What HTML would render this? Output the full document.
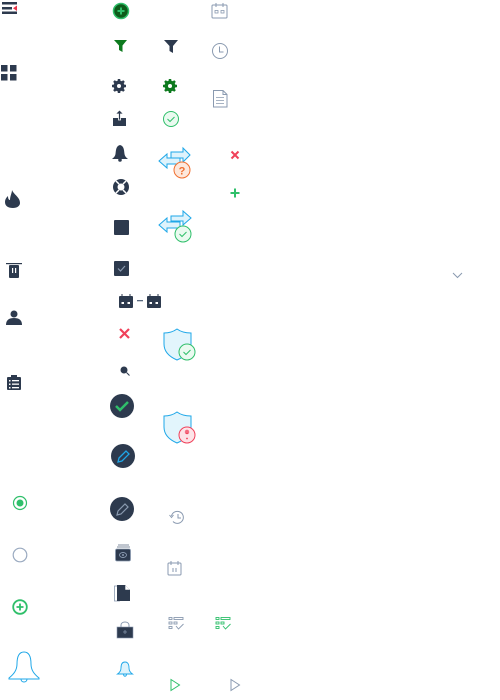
<!DOCTYPE html>
<html><head><meta charset="utf-8"><style>
html,body{margin:0;padding:0;background:#fff;width:500px;height:700px;overflow:hidden}
svg{position:absolute;left:0;top:0}
</style></head><body>
<svg width="500" height="700" viewBox="0 0 500 700" xmlns="http://www.w3.org/2000/svg">
<g fill="#2d3a4e">
 <!-- hamburger -->
 <rect x="2" y="2" width="15" height="2.5"/><rect x="2" y="7" width="10" height="2.5"/><rect x="2" y="11.5" width="15" height="2.5"/>
 <path d="M17 5.5 L13 8.2 L17 11 Z" fill="#e8344a"/>
 <!-- grid -->
 <rect x="1" y="65" width="6.5" height="6.5"/><rect x="10" y="65" width="6.5" height="6.5"/><rect x="1" y="74" width="6.5" height="6.5"/><rect x="10" y="74" width="6.5" height="6.5"/>
 <!-- flame -->
 <path d="M12 190 C14 195 20 197 20 203 C20 206 17 208 13 208 C8 208 5 206 5 202 C5 199 7 197 8 196 C8 199 9 200 10 200 C10 196 12 193 12 190 Z"/>
 <!-- trash -->
 <rect x="6" y="263" width="16" height="1.2"/><rect x="9" y="265" width="10" height="13" rx="1"/>
 <rect x="12" y="268" width="1.2" height="5" fill="#fff"/><rect x="15" y="268" width="1.2" height="5" fill="#fff"/>
 <!-- person -->
 <circle cx="14" cy="314" r="3.5"/><path d="M6 325 C6 320 9 318 14 318 C19 318 22 320 22 325 Z"/>
 <!-- clipboard -->
 <rect x="7" y="377" width="14" height="13" rx="1"/><rect x="11" y="375" width="6" height="3"/>
 <g fill="#fff"><rect x="9" y="380" width="1.5" height="1.5"/><rect x="12" y="380" width="7" height="1.3"/><rect x="9" y="383.5" width="1.5" height="1.5"/><rect x="12" y="383.5" width="7" height="1.3"/><rect x="9" y="387" width="1.5" height="1.5"/><rect x="12" y="387" width="7" height="1.3"/></g>
</g>
<!-- radios -->
<circle cx="20" cy="503" r="6.5" fill="none" stroke="#2fbf6a" stroke-width="1.2"/><circle cx="20" cy="503" r="3.5" fill="#2fbf6a"/>
<circle cx="20" cy="555" r="6.8" fill="none" stroke="#9aaac0" stroke-width="1.2"/>
<circle cx="20" cy="607" r="6.8" fill="none" stroke="#2fbf6a" stroke-width="1.8"/><path d="M20 603.5v7M16.5 607h7" stroke="#2fbf6a" stroke-width="1.8"/>
<!-- big bell -->
<path d="M24 652 C18 652 17 658 17 664 C17 670 14 674 9 678 L9 679 L39 679 L39 678 C34 674 31 670 31 664 C31 658 30 652 24 652 Z M21 679 C21 683 27 683 27 679" fill="none" stroke="#1ea7e8" stroke-width="1"/>

<!-- column 2 -->
<circle cx="121" cy="11" r="7.5" fill="#0d5c1a" stroke="#2fbf6a" stroke-width="1.5"/><path d="M121 7.5v7M117.5 11h7" stroke="#2fbf6a" stroke-width="2"/>
<path d="M114 40 H127 L122.5 45.5 V52 L119 50 V45.5 Z" fill="#0d7a1e"/>
<g fill="#2d3a4e">
 <circle cx="119" cy="86" r="5.5"/><g stroke="#2d3a4e" stroke-width="2.5"><path d="M119 79v14M112 86h14M114 81l10 10M124 81l-10 10"/></g><circle cx="119" cy="86" r="2" fill="#fff"/>
 <rect x="113" y="118" width="13" height="8"/><path d="M119.5 110 L115.5 114 H118.5 V120 H120.5 V114 H123.5 Z" stroke="#fff" stroke-width="0.8"/>
 <path d="M120 145 C116 146 116 150 115.5 154 C115 157 113 158 112 159 H128 C127 158 125 157 124.5 154 C124 150 124 146 120 145 Z"/><circle cx="120" cy="160" r="1.8"/>
 <circle cx="121" cy="187" r="8"/><circle cx="121" cy="187" r="3.5" fill="#fff"/>
 <rect x="114" y="220" width="15" height="15" rx="1"/>
 <rect x="114" y="261" width="15" height="15" rx="1"/>
</g>
<path d="M116 193 l3-3 M126 193 l-3-3 M116 181 l3 3 M126 181 l-3 3" stroke="#fff" stroke-width="1.5"/>
<path d="M118 268.5 l2.5 2.5 l4.5-5" stroke="#8a9ab0" stroke-width="1.2" fill="none"/>
<!-- calendars pair -->
<g fill="#2d3a4e"><rect x="119" y="296" width="14" height="12" rx="1"/><rect x="147" y="296" width="14" height="12" rx="1"/><rect x="137" y="300" width="6" height="1.3" fill="#5a6a80"/></g>
<g fill="#fff"><rect x="121.5" y="302" width="2.5" height="2"/><rect x="127.5" y="302" width="2.5" height="2"/><rect x="149.5" y="302" width="2.5" height="2"/><rect x="155.5" y="302" width="2.5" height="2"/></g>
<g stroke="#2d3a4e" stroke-width="1"><path d="M122 294v3M130 294v3M150 294v3M158 294v3"/></g>
<path d="M120 329 l9 9 M129 329 l-9 9" stroke="#f0415a" stroke-width="2.2"/>
<circle cx="124" cy="370" r="3.5" fill="#2d3a4e"/><path d="M126.5 372.5 l3 3" stroke="#2d3a4e" stroke-width="1"/>
<circle cx="122" cy="406" r="12" fill="#2d3a4e"/><path d="M116 406 l4 4 l8-8" stroke="#2fbf6a" stroke-width="2.5" fill="none"/>
<circle cx="123" cy="456" r="12" fill="#2d3a4e"/><path d="M118 462 l1-4 l7-7 l3 3 l-7 7 Z" stroke="#1ea7e8" stroke-width="1.3" fill="none"/>
<circle cx="122" cy="509" r="12" fill="#2d3a4e"/><path d="M117 515 l1-4 l7-7 l3 3 l-7 7 Z" stroke="#8a9ab0" stroke-width="1.2" fill="none"/>
<!-- money -->
<g><path d="M118 545h11M117 547h13" stroke="#5a6a80" stroke-width="0.8"/><rect x="115.5" y="549" width="15" height="12" rx="1.5" fill="#2d3a4e" stroke="#8a9ab0" stroke-width="0.8"/><ellipse cx="123" cy="555" rx="3.5" ry="2.5" fill="none" stroke="#8a9ab0" stroke-width="0.9"/><circle cx="123" cy="555" r="1" fill="#8a9ab0"/></g>
<!-- files -->
<rect x="114.5" y="586" width="5" height="15" fill="#fff" stroke="#8a9ab0" stroke-width="0.8"/><path d="M117 585 H125 L130 590 V601 H117 Z" fill="#2d3a4e"/><path d="M125 585 V590 H130" fill="#fff" stroke="#2d3a4e" stroke-width="0.6"/>
<!-- lock -->
<path d="M121 628 V625 C121 621 129 621 129 625 V628" fill="none" stroke="#8a9ab0" stroke-width="1"/><rect x="117" y="627" width="16" height="11" fill="#2d3a4e" stroke="#8a9ab0" stroke-width="0.6"/><circle cx="125" cy="632" r="1.1" fill="none" stroke="#8a9ab0" stroke-width="0.7"/>
<!-- small bell -->
<path d="M125 662 C122 662 121 665 121 668 C121 671 119 673 117.5 674 H132.5 C131 673 129 671 129 668 C129 665 128 662 125 662 Z M123.5 674 C123.5 677 126.5 677 126.5 674" fill="#def3fc" stroke="#1ea7e8" stroke-width="0.9"/>

<!-- column 3 -->
<path d="M164 40 H178 L173 46 V53 L169.5 51 V46 Z" fill="#2d3a4e"/>
<g fill="#0d7a1e"><circle cx="170" cy="86" r="5.5"/><g stroke="#0d7a1e" stroke-width="2.5"><path d="M170 79v14M163 86h14M165 81l10 10M175 81l-10 10"/></g><circle cx="170" cy="86" r="2" fill="#fff"/></g>
<circle cx="171" cy="119" r="7.5" fill="#eafaf0" stroke="#2fbf6a" stroke-width="1"/><path d="M167.5 119 l2.5 2.5 l4.5-4.5" stroke="#2fbf6a" stroke-width="1" fill="none"/>
<!-- arrows q -->
<g fill="#def3fc" stroke="#1ea7e8" stroke-width="1"><path d="M171 152 H183 V148 L190 155 L183 162 V158 H171 Z"/><path d="M180 158 H167 V154 L159 161 L167 168 V164 H180 Z"/></g>
<circle cx="182" cy="170" r="8" fill="#fde8dc" stroke="#f07030" stroke-width="1"/><text x="182" y="174.5" font-family="Liberation Sans,sans-serif" font-weight="bold" font-size="11" fill="#f07030" text-anchor="middle">?</text>
<g fill="#def3fc" stroke="#1ea7e8" stroke-width="1"><path d="M171 216 H183 V211 L191 218 L183 225 V221 H171 Z"/><path d="M180 222 H167 V218 L159 225 L167 232 V228 H180 Z"/></g>
<circle cx="183" cy="234" r="8" fill="#eafaf0" stroke="#2fbf6a" stroke-width="1"/><path d="M179.5 234 l2.5 2.5 l4.5-4.5" stroke="#2fbf6a" stroke-width="1" fill="none"/>
<!-- shields -->
<path d="M177 329 C173 332 168 333 164 333 V344 C164 352 170 357 177 360 C184 357 191 352 191 344 V333 C186 333 181 332 177 329 Z" fill="#e2f5fc" stroke="#1ea7e8" stroke-width="1"/>
<circle cx="187" cy="352" r="8" fill="#eafaf0" stroke="#2fbf6a" stroke-width="1"/><path d="M183.5 352 l2.5 2.5 l4.5-4.5" stroke="#2fbf6a" stroke-width="1" fill="none"/>
<path d="M177 412 C173 415 168 416 164 416 V427 C164 435 170 440 177 443 C184 440 191 435 191 427 V416 C186 416 181 415 177 412 Z" fill="#e2f5fc" stroke="#1ea7e8" stroke-width="1"/>
<circle cx="187" cy="435" r="8" fill="#fde4e8" stroke="#f0415a" stroke-width="1"/><path d="M187 431 v3" stroke="#f0415a" stroke-width="1.5"/><circle cx="187" cy="432" r="1.8" fill="none" stroke="#f0415a" stroke-width="0.8"/><circle cx="187" cy="438.5" r="0.9" fill="#f0415a"/>
<!-- history -->
<path d="M171.5 516 A6 6 0 1 1 173 521.5" fill="none" stroke="#8a9ab0" stroke-width="1"/><path d="M169.5 515 l2 2.5 l2-2.5" fill="none" stroke="#8a9ab0" stroke-width="1"/><path d="M178 514 v4 h3" fill="none" stroke="#8a9ab0" stroke-width="1"/>
<!-- calendar -->
<rect x="168" y="563" width="13" height="12" rx="1" fill="none" stroke="#8a9ab0" stroke-width="1"/><path d="M171 561v4M178 561v4M173 568v4M176 568v4" stroke="#8a9ab0" stroke-width="1"/>
<!-- list checks -->
<g fill="none" stroke="#8a9ab0" stroke-width="0.9"><rect x="169" y="617.5" width="3" height="2"/><rect x="174" y="617.5" width="9" height="2"/><rect x="169" y="622" width="3" height="2"/><rect x="174" y="622" width="3" height="2"/><rect x="169" y="626.5" width="3" height="2"/><path d="M176 626 l2.5 3 l5-5"/></g>
<g fill="none" stroke="#2fbf6a" stroke-width="0.9"><rect x="216" y="617.5" width="3" height="2"/><rect x="221" y="617.5" width="9" height="2"/><rect x="216" y="622" width="3" height="2"/><rect x="221" y="622" width="3" height="2"/><rect x="216" y="626.5" width="3" height="2"/><path d="M223 626 l2.5 3 l5-5"/></g>
<path d="M171 679.5 V690.5 L179.5 685 Z" fill="none" stroke="#2fbf6a" stroke-width="1"/>
<path d="M231 679.5 V690.5 L239.5 685 Z" fill="none" stroke="#8a9ab0" stroke-width="1"/>

<!-- column 4 -->
<rect x="212" y="5" width="15" height="13" rx="1" fill="none" stroke="#8a9ab0" stroke-width="1"/><path d="M216 3v4M223 3v4" stroke="#8a9ab0" stroke-width="1"/><rect x="215" y="10.5" width="3" height="2.5" fill="none" stroke="#8a9ab0" stroke-width="0.8"/><rect x="221" y="10.5" width="3" height="2.5" fill="none" stroke="#8a9ab0" stroke-width="0.8"/>
<circle cx="220" cy="51" r="7.5" fill="none" stroke="#8a9ab0" stroke-width="1"/><path d="M219.5 46.5 V52 H223.5" fill="none" stroke="#8a9ab0" stroke-width="1"/>
<path d="M213.5 90.5 H223 L227 94.5 V107 H213.5 Z M223 90.5 V94.5 H227" fill="none" stroke="#8a9ab0" stroke-width="1"/><path d="M216 97.5h8M216 100.5h8M216 103.5h8" stroke="#8a9ab0" stroke-width="0.8"/>
<path d="M231.5 151.5 l7 7 M238.5 151.5 l-7 7" stroke="#f0415a" stroke-width="2"/>
<path d="M235 188.5 v9 M230.5 193 h9" stroke="#2fbf6a" stroke-width="2"/>
<!-- chevron -->
<path d="M453 273 l4.5 4.5 l4.5-4.5" fill="none" stroke="#8a9ab0" stroke-width="1"/>
</svg>
</body></html>
